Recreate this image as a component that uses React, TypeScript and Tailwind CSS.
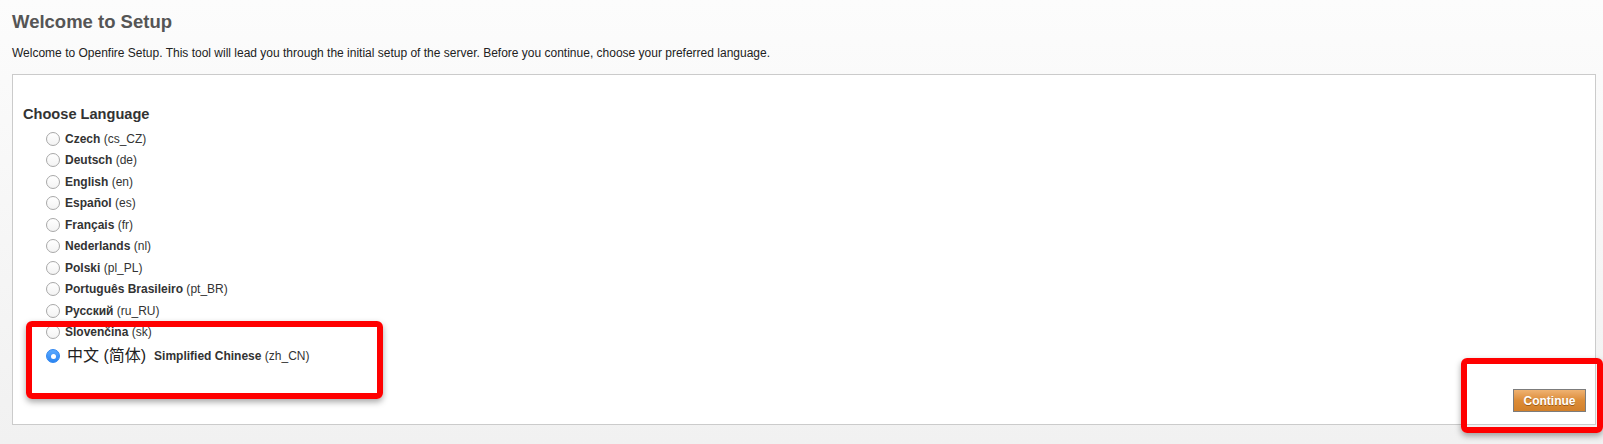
const languages: { name: string; code: string }[] = [
  { name: 'Czech', code: 'cs_CZ' },
  { name: 'Deutsch', code: 'de' },
  { name: 'English', code: 'en' },
  { name: 'Español', code: 'es' },
  { name: 'Français', code: 'fr' },
  { name: 'Nederlands', code: 'nl' },
  { name: 'Polski', code: 'pl_PL' },
  { name: 'Português Brasileiro', code: 'pt_BR' },
  { name: 'Русский', code: 'ru_RU' },
  { name: 'Slovenčina', code: 'sk' },
];

function Radio({ checked }: { checked?: boolean }) {
  if (checked) {
    return (
      <span className="flex h-[14px] w-[14px] shrink-0 items-center justify-center rounded-full border border-[#2f86f0] bg-gradient-to-b from-[#5aa9ff] to-[#2a85f2]">
        <span className="h-[5px] w-[5px] rounded-full bg-white" />
      </span>
    );
  }
  return (
    <span className="h-[14px] w-[14px] shrink-0 rounded-full border border-[#a8a8a8] bg-gradient-to-b from-white to-[#f3f3f3]" />
  );
}

export default function App() {
  return (
    <div
      className="relative min-h-screen bg-gradient-to-b from-[#fcfcfc] to-[#f1f1f1] pl-[12px] pr-[7px] pt-[11px] text-[#333]"
      style={{ fontFamily: '"Liberation Sans", Arial, "Noto Sans CJK SC", sans-serif' }}
    >
      <h1 className="text-[18.5px] font-bold leading-[22px] text-[#555]">Welcome to Setup</h1>
      <p className="mt-[12px] text-[12px] leading-[16px] text-[#222]">
        Welcome to Openfire Setup. This tool will lead you through the initial setup of the server. Before you continue, choose your preferred language.
      </p>

      <div className="mt-[13px] flex h-[351px] flex-col border border-[#cbcbcb] bg-white">
        <div className="pl-[10px] pt-[29px]">
          <h2 className="text-[14.6px] font-bold leading-[20px] text-[#333]">Choose Language</h2>
          <ul className="mt-[4px] pl-[23px]">
            {languages.map((l) => (
              <li key={l.code} className="flex h-[21.5px] items-center gap-[5px] text-[12px] leading-[14px]">
                <Radio />
                <span>
                  <b className="font-bold">{l.name}</b> ({l.code})
                </span>
              </li>
            ))}
            <li className="flex h-[24px] items-center gap-[7px] pt-[2px] text-[12px] leading-[14px]">
              <Radio checked />
              <span className="flex items-center gap-[8px]">
                <span className="text-[16px] text-[#222]">中文 (简体)</span>
                <span>
                  <b className="font-bold">Simplified Chinese</b> (zh_CN)
                </span>
              </span>
            </li>
          </ul>
        </div>
        <div className="mt-auto flex justify-end pb-[12px] pr-[9px]">
          <button className="h-[23px] w-[73px] border border-[#7c7c7c] bg-gradient-to-b from-[#efb271] via-[#dc8c37] to-[#d2802a] text-[12px] font-bold text-white [text-shadow:0_1px_0_rgba(120,60,0,0.6)]">
            Continue
          </button>
        </div>
      </div>

      <div className="absolute left-[26px] top-[321px] h-[78px] w-[357px] rounded-[6px] border-[6px] border-[#ff0000] shadow-[0_3px_6px_rgba(0,0,0,0.35)]" />
      <div className="absolute left-[1461px] top-[358px] h-[75px] w-[142px] rounded-[6px] border-[6px] border-[#ff0000] shadow-[0_3px_6px_rgba(0,0,0,0.35)]" />
    </div>
  );
}
